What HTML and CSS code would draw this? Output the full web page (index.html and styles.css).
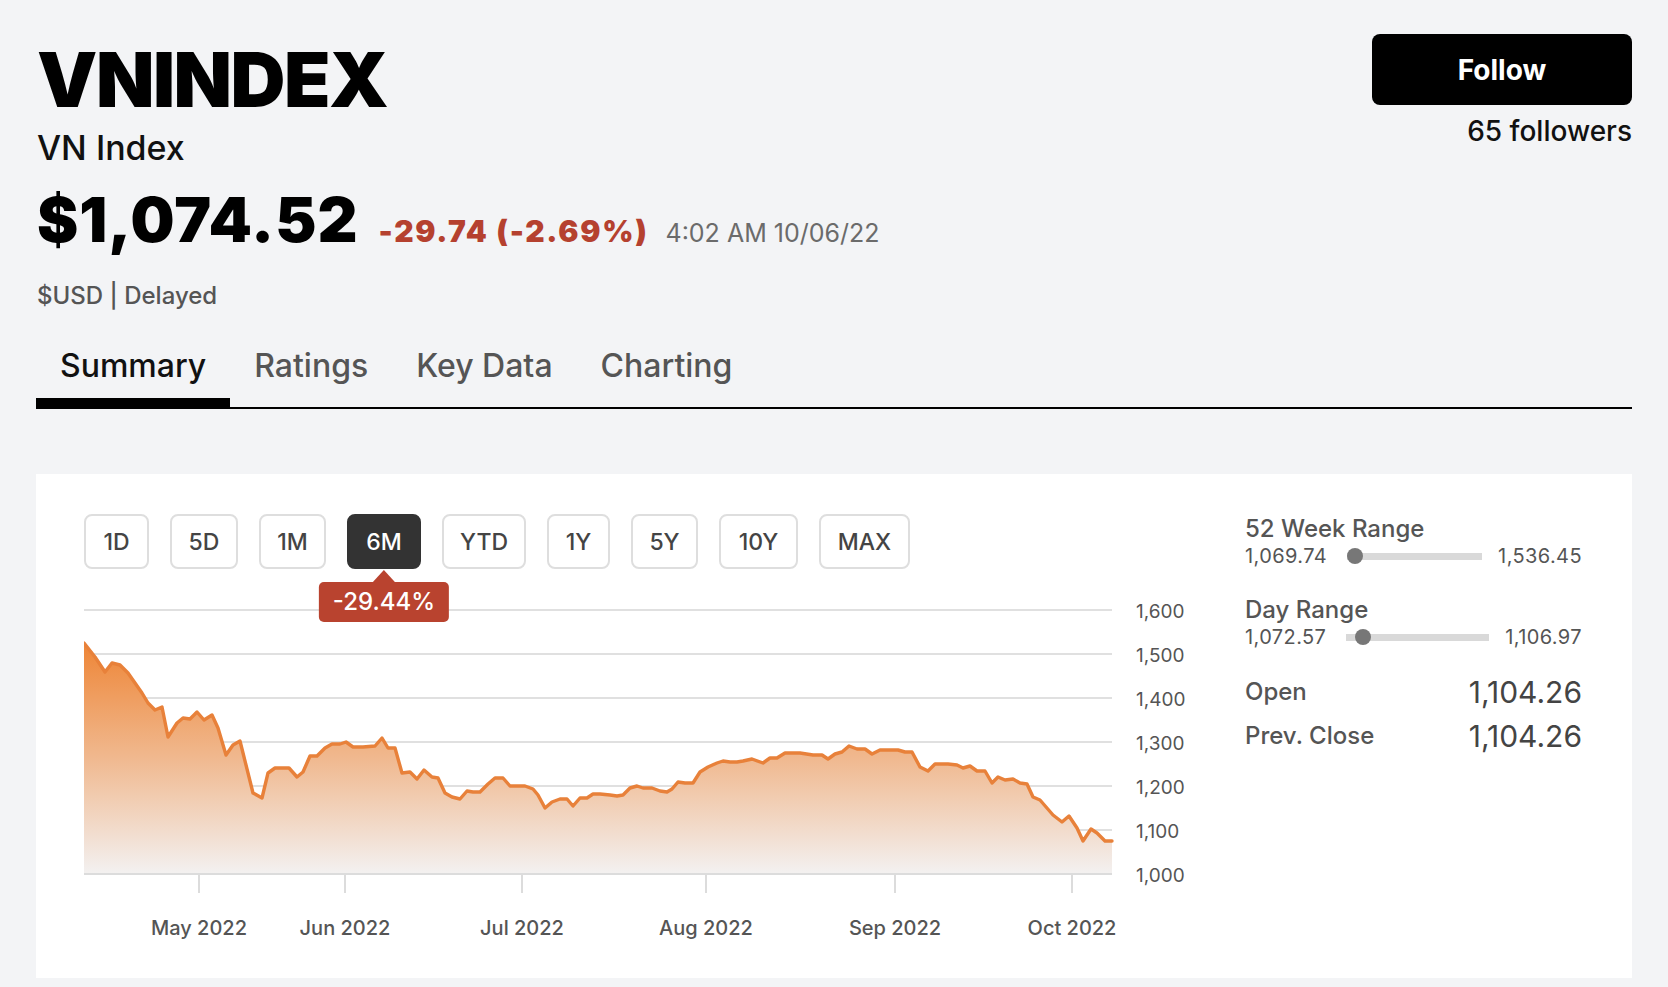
FILE: index.html
```html
<!DOCTYPE html>
<html lang="en">
<head>
<meta charset="utf-8">
<title>VNINDEX</title>
<link rel="stylesheet" href="styles.css">
</head>
<body>
<div class="page">
  <header class="header">
    <div class="title-block">
      <h1 class="symbol">VNINDEX</h1>
      <div class="name">VN Index</div>
      <div class="quote">
        <span class="price">$1,074.52</span>
        <span class="change">-29.74 (-2.69%)</span>
        <span class="time">4:02 AM 10/06/22</span>
      </div>
      <div class="currency">$USD | Delayed</div>
    </div>
    <div class="follow-block">
      <button class="follow">Follow</button>
      <div class="followers">65 followers</div>
    </div>
  </header>

  <nav class="tabs">
    <div class="tab active">Summary</div>
    <div class="tab">Ratings</div>
    <div class="tab">Key Data</div>
    <div class="tab">Charting</div>
  </nav>

  <section class="card">
    <div class="chart-col">
      <div class="ranges">
        <div class="range r-1d">1D</div>
        <div class="range r-5d">5D</div>
        <div class="range r-1m">1M</div>
        <div class="range r-6m active">6M<div class="tooltip">-29.44%</div></div>
        <div class="range r-ytd">YTD</div>
        <div class="range r-1y">1Y</div>
        <div class="range r-5y">5Y</div>
        <div class="range r-10y">10Y</div>
        <div class="range r-max">MAX</div>
      </div>
      <svg class="chart" viewBox="84 590 1110 362" width="1110" height="362" xmlns="http://www.w3.org/2000/svg">
        <defs>
          <linearGradient id="fillg" gradientUnits="userSpaceOnUse" x1="0" y1="640" x2="0" y2="874">
            <stop offset="0" stop-color="#ee8434"/>
            <stop offset="0.5" stop-color="#f0b88e"/>
            <stop offset="1" stop-color="#f3f1f1"/>
          </linearGradient>
        </defs>
        <g class="grid">
          <line x1="84" y1="610" x2="1112" y2="610"/>
          <line x1="84" y1="654" x2="1112" y2="654"/>
          <line x1="84" y1="698" x2="1112" y2="698"/>
          <line x1="84" y1="742" x2="1112" y2="742"/>
          <line x1="84" y1="786" x2="1112" y2="786"/>
          <line x1="84" y1="830" x2="1112" y2="830"/>
        </g>
        <path class="area" d="M84,874 L84,643 95,657 105,672 112,663 120,665 128,673 142,693 148,703 155,710 162,707 168,737 177,723 183,718 190,719 197,712 204,720 212,715 218,728 226,755 233,745 240,741 253,793 262,798 268,773 275,768 289,768 297,777 303,772 310,756 317,756 325,748 332,744 340,744 346,742 353,747 363,747 375,746 382,738 388,748 395,748 402,773 410,772 417,779 424,770 432,777 438,778 445,793 452,797 460,799 467,791 473,792 480,792 488,784 495,778 503,778 510,786 525,786 533,789 538,795 545,808 552,802 560,799 567,799 573,806 580,798 587,798 593,794 600,794 610,795 617,796 623,795 630,788 637,786 643,788 652,788 660,791 667,792 672,789 678,782 685,783 693,783 700,772 708,767 717,763 723,761 730,762 737,762 743,761 752,759 763,763 770,758 777,758 785,753 800,753 813,755 822,755 828,759 835,754 842,752 849,746 857,749 865,749 872,754 880,750 898,750 905,752 912,752 920,767 928,771 935,764 948,764 957,765 963,768 970,766 977,771 985,771 992,783 998,777 1005,780 1013,779 1020,783 1027,784 1033,797 1040,800 1053,815 1062,822 1069,816 1077,828 1083,841 1091,829 1097,833 1105,841 1112,841 L1112,874 Z"/>
        <g class="axis-lines">
          <line x1="84" y1="874" x2="1112" y2="874"/>
          <line x1="199" y1="875" x2="199" y2="893"/>
          <line x1="345" y1="875" x2="345" y2="893"/>
          <line x1="522" y1="875" x2="522" y2="893"/>
          <line x1="706" y1="875" x2="706" y2="893"/>
          <line x1="895" y1="875" x2="895" y2="893"/>
          <line x1="1072" y1="875" x2="1072" y2="893"/>
        </g>
        <polyline class="line" points="84,643 95,657 105,672 112,663 120,665 128,673 142,693 148,703 155,710 162,707 168,737 177,723 183,718 190,719 197,712 204,720 212,715 218,728 226,755 233,745 240,741 253,793 262,798 268,773 275,768 289,768 297,777 303,772 310,756 317,756 325,748 332,744 340,744 346,742 353,747 363,747 375,746 382,738 388,748 395,748 402,773 410,772 417,779 424,770 432,777 438,778 445,793 452,797 460,799 467,791 473,792 480,792 488,784 495,778 503,778 510,786 525,786 533,789 538,795 545,808 552,802 560,799 567,799 573,806 580,798 587,798 593,794 600,794 610,795 617,796 623,795 630,788 637,786 643,788 652,788 660,791 667,792 672,789 678,782 685,783 693,783 700,772 708,767 717,763 723,761 730,762 737,762 743,761 752,759 763,763 770,758 777,758 785,753 800,753 813,755 822,755 828,759 835,754 842,752 849,746 857,749 865,749 872,754 880,750 898,750 905,752 912,752 920,767 928,771 935,764 948,764 957,765 963,768 970,766 977,771 985,771 992,783 998,777 1005,780 1013,779 1020,783 1027,784 1033,797 1040,800 1053,815 1062,822 1069,816 1077,828 1083,841 1091,829 1097,833 1105,841 1112,841"/>
        <g class="ylabels">
          <text x="1136" y="618">1,600</text>
          <text x="1136" y="662">1,500</text>
          <text x="1136" y="706">1,400</text>
          <text x="1136" y="750">1,300</text>
          <text x="1136" y="794">1,200</text>
          <text x="1136" y="838">1,100</text>
          <text x="1136" y="882">1,000</text>
        </g>
        <g class="xlabels">
          <text x="199" y="935">May 2022</text>
          <text x="345" y="935">Jun 2022</text>
          <text x="522" y="935">Jul 2022</text>
          <text x="706" y="935">Aug 2022</text>
          <text x="895" y="935">Sep 2022</text>
          <text x="1072" y="935">Oct 2022</text>
        </g>
      </svg>
    </div>

    <aside class="stats">
      <div class="stat-title">52 Week Range</div>
      <div class="range-row">
        <span class="rv">1,069.74</span>
        <span class="track"><span class="dot dot-52"></span></span>
        <span class="rv">1,536.45</span>
      </div>
      <div class="stat-title second">Day Range</div>
      <div class="range-row">
        <span class="rv">1,072.57</span>
        <span class="track track-day"><span class="dot dot-day"></span></span>
        <span class="rv">1,106.97</span>
      </div>
      <div class="kv kv-first">
        <span class="label">Open</span>
        <span class="value">1,104.26</span>
      </div>
      <div class="kv">
        <span class="label">Prev. Close</span>
        <span class="value">1,104.26</span>
      </div>
    </aside>
  </section>
</div>
</body>
</html>
```

FILE: styles.css
```css
* { box-sizing: border-box; }

body {
  margin: 0;
  background: #f3f4f6;
  font-family: Inter, "Noto Sans", "Liberation Sans", sans-serif;
  color: #111;
}

.page {
  padding: 34px 36px 0 36px;
}

.header {
  display: flex;
  justify-content: space-between;
  align-items: flex-start;
}

.title-block {
  padding-left: 1px;
}

.symbol {
  margin: 7px 0 0;
  font-size: 76px;
  line-height: 76px;
  font-weight: 900;
  letter-spacing: -1.5px;
  color: #000;
}

.name {
  margin-top: 11px;
  font-size: 34px;
  line-height: 40px;
  font-weight: 500;
}

.quote {
  margin-top: 17px;
  display: flex;
  align-items: baseline;
  gap: 20px;
  height: 70px;
}

.price {
  font-size: 62px;
  line-height: 70px;
  font-weight: 900;
  letter-spacing: 1px;
  color: #000;
}

.change {
  font-size: 30px;
  font-weight: 900;
  letter-spacing: 1.7px;
  margin-right: -3px;
  color: #b5412f;
}

.time {
  font-size: 25px;
  font-weight: 400;
  color: #6b6b6b;
}

.currency {
  margin-top: 26px;
  font-size: 24px;
  line-height: 30px;
  font-weight: 500;
  color: #555;
}

.follow-block {
  display: flex;
  flex-direction: column;
  align-items: flex-end;
}

.follow {
  width: 260px;
  height: 71px;
  background: #000;
  color: #fff;
  border: 0;
  border-radius: 8px;
  font-family: Inter, "Noto Sans", "Liberation Sans", sans-serif;
  font-size: 28px;
  font-weight: 700;
}

.followers {
  margin-top: 10px;
  font-size: 28px;
  line-height: 32px;
  font-weight: 500;
}

.tabs {
  display: flex;
  margin-top: 36px;
  border-bottom: 2px solid #000;
}

.tab {
  position: relative;
  padding: 0 24px 22px;
  font-size: 32px;
  line-height: 38px;
  font-weight: 500;
  color: #555;
}

.tab.active {
  color: #111;
}

.tab.active::after {
  content: "";
  position: absolute;
  left: 0;
  right: 0;
  bottom: -2px;
  height: 11px;
  background: #000;
}

.card {
  margin-top: 65px;
  background: #fff;
  display: flex;
  padding: 40px 50px 26px 48px;
}

.chart-col {
  width: 1110px;
  flex: none;
}

.ranges {
  display: flex;
  gap: 21px;
}

.range {
  position: relative;
  height: 55px;
  border: 2px solid #dedede;
  border-radius: 8px;
  background: #fff;
  font-size: 23px;
  font-weight: 500;
  color: #444;
  display: flex;
  align-items: center;
  justify-content: center;
  white-space: nowrap;
}

.r-1d { width: 65px; }
.r-5d { width: 68px; }
.r-1m { width: 67px; }
.r-6m { width: 74px; }
.r-ytd { width: 84px; }
.r-1y { width: 63px; }
.r-5y { width: 67px; }
.r-10y { width: 79px; }
.r-max { width: 91px; }

.range.active {
  background: #333;
  border-color: #333;
  color: #fff;
}

.tooltip {
  position: absolute;
  top: calc(100% + 15px);
  left: 50%;
  transform: translateX(-50%);
  background: #b9432f;
  color: #fff;
  font-size: 24px;
  line-height: 40px;
  font-weight: 500;
  padding: 0 14px;
  border-radius: 5px;
  white-space: nowrap;
}

.tooltip::before {
  content: "";
  position: absolute;
  top: -12px;
  left: 50%;
  margin-left: -11px;
  border-left: 11px solid transparent;
  border-right: 11px solid transparent;
  border-bottom: 12px solid #b9432f;
}

.chart {
  display: block;
  margin-top: 21px;
  width: 1110px;
  height: 362px;
}

.grid line {
  stroke: #e0e0e0;
  stroke-width: 2;
}

.area {
  fill: url(#fillg);
}

.axis-lines line {
  stroke: #dcdcdc;
  stroke-width: 2;
}

.line {
  fill: none;
  stroke: #e8813a;
  stroke-width: 3.4;
  stroke-linejoin: round;
  stroke-linecap: round;
}

.ylabels text {
  font-family: Inter, "Noto Sans", "Liberation Sans", sans-serif;
  font-size: 19px;
  fill: #555;
}

.xlabels text {
  font-family: Inter, "Noto Sans", "Liberation Sans", sans-serif;
  font-size: 20px;
  font-weight: 500;
  fill: #555;
  text-anchor: middle;
}

.stats {
  width: 337px;
  flex: none;
  margin-left: 51px;
  padding-top: 1px;
  color: #555;
}

.stat-title {
  font-size: 24px;
  line-height: 28px;
  font-weight: 500;
}

.stat-title.second {
  margin-top: 28px;
}

.range-row {
  display: flex;
  align-items: center;
  margin-top: 1px;
  font-size: 20px;
  line-height: 24px;
  letter-spacing: 0.4px;
}

.track {
  flex: 1;
  position: relative;
  height: 7px;
  background: #d9d9d9;
  margin: 0 16px 0 20px;
}

.dot {
  position: absolute;
  top: 50%;
  width: 16px;
  height: 16px;
  margin-top: -8px;
  border-radius: 50%;
  background: #777;
}

.dot-52 { left: 0; }
.dot-day { left: 6%; }

.kv {
  display: flex;
  justify-content: space-between;
  align-items: center;
  margin-top: 8px;
}

.kv-first {
  margin-top: 25px;
}

.kv .label {
  font-size: 24px;
  line-height: 28px;
  font-weight: 500;
}

.kv .value {
  font-size: 30px;
  line-height: 36px;
  font-weight: 400;
  color: #444;
}
```
